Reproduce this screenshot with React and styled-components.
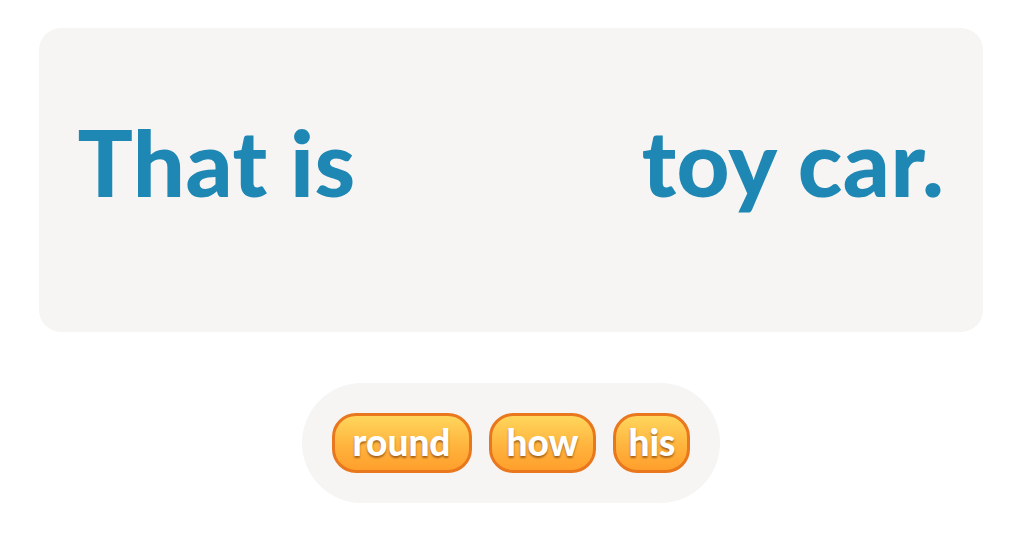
import React from "react";
import styled, { createGlobalStyle } from "styled-components";

const Global = createGlobalStyle`
  html, body { margin: 0; padding: 0; background: #ffffff; }
  body { font-family: "Lato", "Liberation Sans", sans-serif; }
`;

const Page = styled.div`
  width: 1022px;
  height: 533px;
  box-sizing: border-box;
  padding: 28px 39px 0;
  display: flex;
  flex-direction: column;
  align-items: center;
`;

const Card = styled.div`
  width: 944px;
  height: 304px;
  background: #f6f5f4;
  border-radius: 22px;
  display: flex;
  align-items: center;
  justify-content: center;
  padding-bottom: 38px;
  box-sizing: border-box;
`;

const Sentence = styled.div`
  display: flex;
  align-items: baseline;
  font-family: "Lato", "Liberation Sans", sans-serif;
  font-weight: 900;
  font-size: 92px;
  color: #1f87b3;
  letter-spacing: 0.5px;
  white-space: pre;
`;

const Blank = styled.span`
  display: inline-block;
  width: ${(p) => p.$w}px;
`;

const Tray = styled.div`
  margin-top: 51px;
  background: #f6f5f4;
  border-radius: 60px;
  padding: 30px;
  display: flex;
  gap: 17px;
`;

const Chip = styled.button`
  height: 60px;
  box-sizing: border-box;
  padding: 0 ${(p) => p.$px}px 4px;
  border: 3px solid #e9771d;
  border-radius: 24px;
  background: linear-gradient(180deg, #ffd65c 0%, #ffb43e 55%, #ff9f2c 100%);
  font-family: "Lato", "Liberation Sans", sans-serif;
  font-weight: 900;
  font-size: 37px;
  color: #ffffff;
  text-shadow: 0 2px 2px rgba(110, 50, 5, 0.6);
  display: flex;
  align-items: center;
  justify-content: center;
  cursor: pointer;
`;

const words = [
  { t: "round", px: 18 },
  { t: "how", px: 15 },
  { t: "his", px: 12 },
];

export default function App() {
  return (
    <>
      <Global />
      <Page>
        <Card>
          <Sentence>
            <span>That is</span>
            <Blank $w={286} />
            <span>toy car.</span>
          </Sentence>
        </Card>
        <Tray>
          {words.map((w) => (
            <Chip key={w.t} $px={w.px}>{w.t}</Chip>
          ))}
        </Tray>
      </Page>
    </>
  );
}
